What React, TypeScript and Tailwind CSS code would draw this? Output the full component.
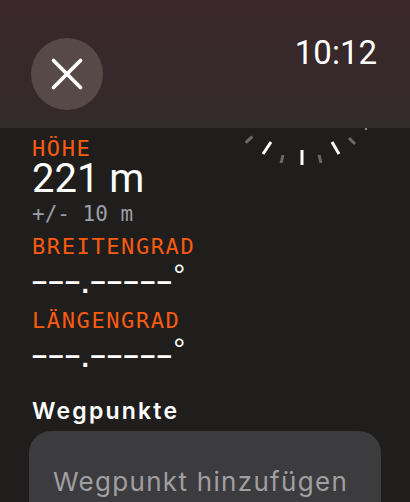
import { X } from "lucide-react";

const mono = { fontFamily: '"DejaVu Sans Mono", monospace' };

function Ticks() {
  // visible part of the compass ring, the rest sits under the header
  return (
    <svg width="150" height="44" viewBox="0 0 150 44" className="absolute right-[30px] top-0">
      <line x1="15.7" y1="14.7" x2="22.3" y2="8.7" stroke="#6b6a69" strokeWidth="3" />
      <line x1="41" y1="14" x2="33" y2="26" stroke="#fff" strokeWidth="3" />
      <line x1="53" y1="27" x2="51" y2="35" stroke="#6b6a69" strokeWidth="3" />
      <line x1="72" y1="22" x2="72" y2="37" stroke="#fff" strokeWidth="3" />
      <line x1="89" y1="27" x2="91" y2="35" stroke="#6b6a69" strokeWidth="3" />
      <line x1="102" y1="14" x2="109" y2="26" stroke="#fff" strokeWidth="3" />
      <line x1="119" y1="10" x2="125" y2="16" stroke="#6b6a69" strokeWidth="3" />
      <circle cx="136" cy="1" r="1.2" fill="#8a8a8a" />
    </svg>
  );
}

function Coord({ label }: { label: string }) {
  return (
    <>
      <div className="text-[22px] leading-[22px] tracking-[1.6px] text-[#fa5b0f] mt-[11px]" style={mono}>
        {label}
      </div>
      <div
        className="text-[27px] font-bold leading-[27px] h-[27px] text-white tracking-[1.5px] mt-[11px] mb-[3px]"
        style={{ fontFamily: '"Liberation Sans", sans-serif' }}
      >
        <span className="relative -top-[3px]">–––</span>.<span className="relative -top-[3px]">–––––</span>
        <span className="relative -top-[8px] text-[30px] font-normal">°</span>
      </div>
    </>
  );
}

export default function App() {
  return (
    <div className="w-[410px] h-[502px] overflow-hidden bg-[#1f1e1d] flex flex-col" style={{ fontFamily: "Inter, sans-serif" }}>
      <header className="h-[128px] shrink-0 bg-gradient-to-b from-[#3a272b] to-[#332a2a] flex items-start justify-between pl-[31px] pr-[33px] pt-[38px]">
        <button className="w-[72px] h-[72px] rounded-full bg-[#574948] flex items-center justify-center text-white">
          <X size={54} strokeWidth={1.65} />
        </button>
        <div
          className="text-[33px] leading-none text-white mt-[-2px]"
          style={{ fontFamily: "Roboto, sans-serif" }}
        >
          10:12
        </div>
      </header>

      <main className="relative flex-1 flex flex-col items-start px-[32px]">
        <Ticks />
        <div className="text-[22px] leading-[20px] tracking-[1.6px] text-[#fa5b0f] mt-[11px]" style={mono}>
          HÖHE
        </div>
        <div className="text-[40px] leading-[36px] text-white mt-[2px]" style={{ fontFamily: "Roboto, sans-serif" }}>
          221 m
        </div>
        <div className="text-[21px] leading-[21px] text-[#9d9ea6] mt-[7px]" style={mono}>
          +/- 10 m
        </div>

        <Coord label="BREITENGRAD" />
        <Coord label="LÄNGENGRAD" />

        <h2 className="text-[23px] font-semibold leading-[23px] text-white tracking-[2.2px] mt-[27px]">Wegpunkte</h2>
        <button className="ml-[-3px] mt-[8px] w-[352px] h-[100px] shrink-0 rounded-[22px] bg-[#3c3b3d] text-left pl-[24px] pt-[38px] items-start flex">
          <span className="text-[26px] leading-none text-[#a09fa1] tracking-[1.3px]">Wegpunkt hinzufügen</span>
        </button>
      </main>
    </div>
  );
}
